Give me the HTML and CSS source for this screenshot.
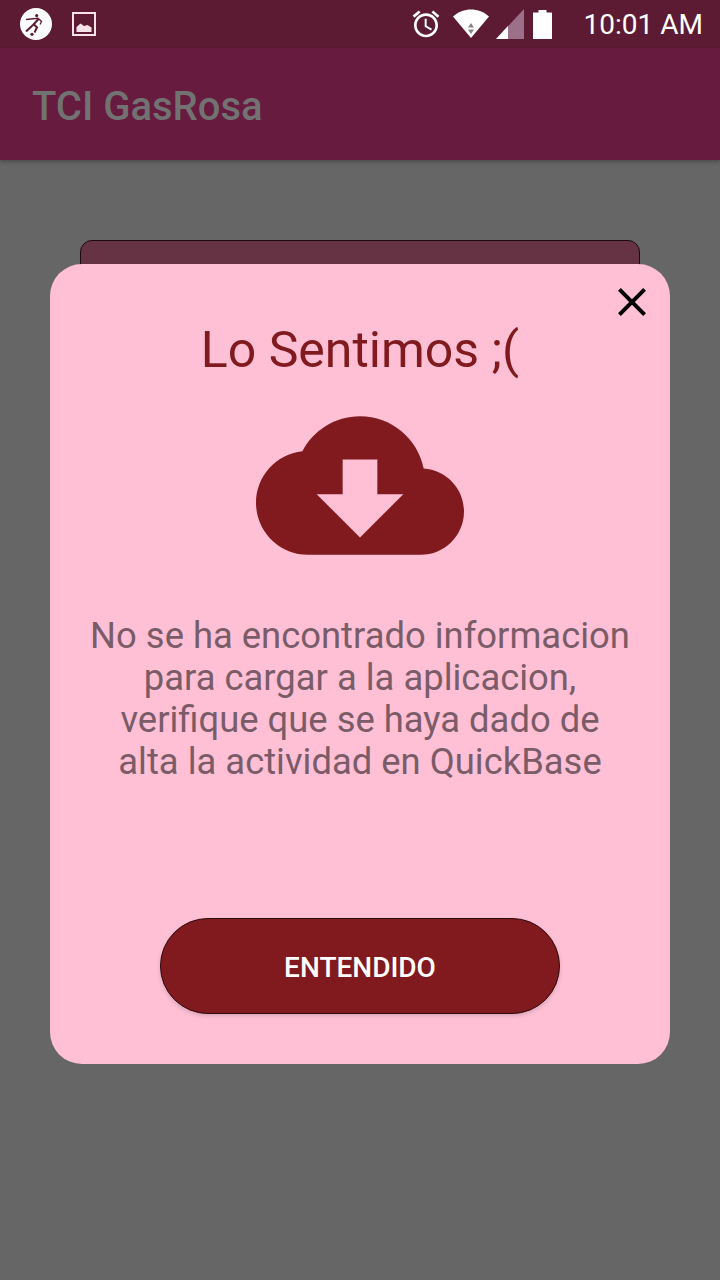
FILE: index.html
```html
<!DOCTYPE html>
<html lang="es">
<head>
    <meta charset="UTF-8">
    <title>TCI GasRosa</title>
    <link rel="stylesheet" href="styles.css">
</head>
<body>
<div class="statusBar">
    <div class="statusLeft">
        <svg class="appBadge" viewBox="0 0 32 32">
            <circle cx="16" cy="16" r="16" fill="#fff"/>
            <circle cx="16.7" cy="7.6" r="1.6" fill="#5c1a33"/>
            <path d="M6 11.500 L18 10.300 L21.500 13.500 L20 16.500" fill="none" stroke="#5c1a33" stroke-width="1.300"/>
            <path d="M18.500 11 L13 17 L6 23.500 M13.500 16 L17 19.500 L14.500 24.500" fill="none" stroke="#5c1a33" stroke-width="2"/>
            <circle cx="12" cy="26.300" r="1.600" fill="#5c1a33"/>
        </svg>
        <svg class="imageIcon" viewBox="0 0 24 24">
            <rect x="1" y="1" width="22" height="22" fill="none" stroke="#fbe0ea" stroke-width="2"/>
            <path d="M4.500 20 V15 L8.500 11.500 L12 14 L15.500 13 L19.500 15.500 V20 Z" fill="#fbe0ea"/>
        </svg>
    </div>
    <div class="statusRight">
        <svg class="alarmIcon" viewBox="0 0 24 24"><path d="M22 5.720l-4.600-3.860-1.290 1.530 4.600 3.860L22 5.720zM7.880 3.390L6.600 1.860 2 5.710l1.290 1.530 4.590-3.850zM12.500 8H11v6l4.750 2.850.75-1.230-4-2.370V8zM12 4c-4.970 0-9 4.030-9 9s4.030 9 9 9 9-4.030 9-9-4.030-9-9-9zm0 16c-3.870 0-7-3.130-7-7s3.130-7 7-7 7 3.130 7 7-3.130 7-7 7z" fill="#fff"/></svg>
        <svg class="wifiIcon" viewBox="0 0 36 30">
            <path d="M0 7.500 C10 -2 26 -2 36 7.500 L18 29 Z" fill="#fff"/>
            <path d="M18 14 L21 18.500 H15 Z M18 25 L15 20.500 H21 Z" fill="#8a8288"/>
        </svg>
        <svg class="signalIcon" viewBox="0 0 28 30">
            <path d="M0 30 L28 0 V30 Z" fill="#9c7088"/>
            <path d="M0 30 L12 17 V30 Z" fill="#fff"/>
        </svg>
        <svg class="batteryIcon" viewBox="0 0 19 29">
            <path d="M5.500 0 H13.500 V2.500 H19 V29 H0 V2.500 H5.500 Z" fill="#fff"/>
        </svg>
        <span class="clock">10:01 AM</span>
    </div>
</div>
<div class="appBar">TCI GasRosa</div>
<div class="content">
    <div class="backCard"></div>
</div>

<div class="dialog">
    <svg class="closeIcon" viewBox="5 5 14 14"><path d="M19 6.410L17.590 5 12 10.590 6.410 5 5 6.410 10.590 12 5 17.590 6.410 19 12 13.410 17.590 19 19 17.590 13.410 12z"/></svg>
    <h1 class="dialogTitle">Lo Sentimos ;(</h1>
    <svg class="cloudIcon" viewBox="0 4 24 16"><path fill-rule="evenodd" d="M19.350 10.040C18.670 6.590 15.640 4 12 4 9.110 4 6.600 5.640 5.350 8.040 2.340 8.360 0 10.910 0 14c0 3.310 2.690 6 6 6h13c2.760 0 5-2.240 5-5 0-2.640-2.050-4.780-4.650-4.960zM17 13l-5 5-5-5h3V9h4v4h3z"/></svg>
    <p class="dialogText">No se ha encontrado informacion para cargar a la aplicacion, verifique que se haya dado de alta la actividad en QuickBase</p>
    <button class="okButton">ENTENDIDO</button>
</div>
</body>
</html>
```

FILE: styles.css
```css
* {
    box-sizing: border-box;
}

body {
    display: flex;
    flex-direction: column;
    width: 720px;
    height: 1280px;
    margin: 0;
    overflow: hidden;
    background: #666666;
    font-family: Roboto, sans-serif;
}

.statusBar {
    display: flex;
    justify-content: space-between;
    align-items: center;
    height: 48px;
    padding: 0 17px 0 20px;
    background: #5c1a33;
}

.statusLeft,
.statusRight {
    display: flex;
    align-items: center;
}

.appBadge {
    width: 32px;
    height: 32px;
}

.imageIcon {
    width: 24px;
    height: 24px;
    margin-left: 20px;
}

.alarmIcon {
    width: 32px;
    height: 32px;
}

.wifiIcon {
    width: 36px;
    height: 30px;
    margin-left: 11px;
}

.signalIcon {
    width: 28px;
    height: 30px;
    margin-left: 7px;
}

.batteryIcon {
    width: 19px;
    height: 29px;
    margin-left: 9px;
}

.clock {
    margin-left: 32px;
    font-size: 28px;
    color: #ffffff;
}

.appBar {
    display: flex;
    align-items: center;
    height: 112px;
    padding: 5px 0 0 32px;
    background: #671b3f;
    box-shadow: 0 2px 4px rgba(0, 0, 0, 0.25);
    font-size: 40px;
    font-weight: 500;
    color: #727272;
}

.content {
    flex: 1;
    padding: 80px 80px 0;
}

.backCard {
    height: 200px;
    border: 1px solid #1c0a10;
    border-radius: 12px;
    background: #663344;
}

.dialog {
    position: absolute;
    top: 264px;
    left: 50px;
    display: flex;
    flex-direction: column;
    align-items: center;
    width: 620px;
    height: 800px;
    padding-top: 56px;
    border-radius: 32px;
    background: #ffc0d5;
}

.closeIcon {
    position: absolute;
    top: 24px;
    right: 24px;
    width: 28px;
    height: 28px;
}

.dialogTitle {
    margin: 0;
    font-size: 50px;
    font-weight: 400;
    line-height: 60px;
    color: #801a1e;
}

.cloudIcon {
    width: 208px;
    height: 139px;
    margin-top: 36px;
    fill: #801a1e;
}

.dialogText {
    width: 548px;
    margin: 60px 0 0;
    font-size: 36.4px;
    line-height: 42px;
    text-align: center;
    color: #7a5c68;
}

.okButton {
    width: 400px;
    height: 96px;
    margin-top: 135px;
    padding-top: 4px;
    border: 1px solid #2a0a0c;
    border-radius: 48px;
    background: #801a1e;
    box-shadow: 0 2px 4px rgba(0, 0, 0, 0.15);
    font-family: Roboto, sans-serif;
    font-size: 28px;
    font-weight: 500;
    color: #ffffff;
}
```
